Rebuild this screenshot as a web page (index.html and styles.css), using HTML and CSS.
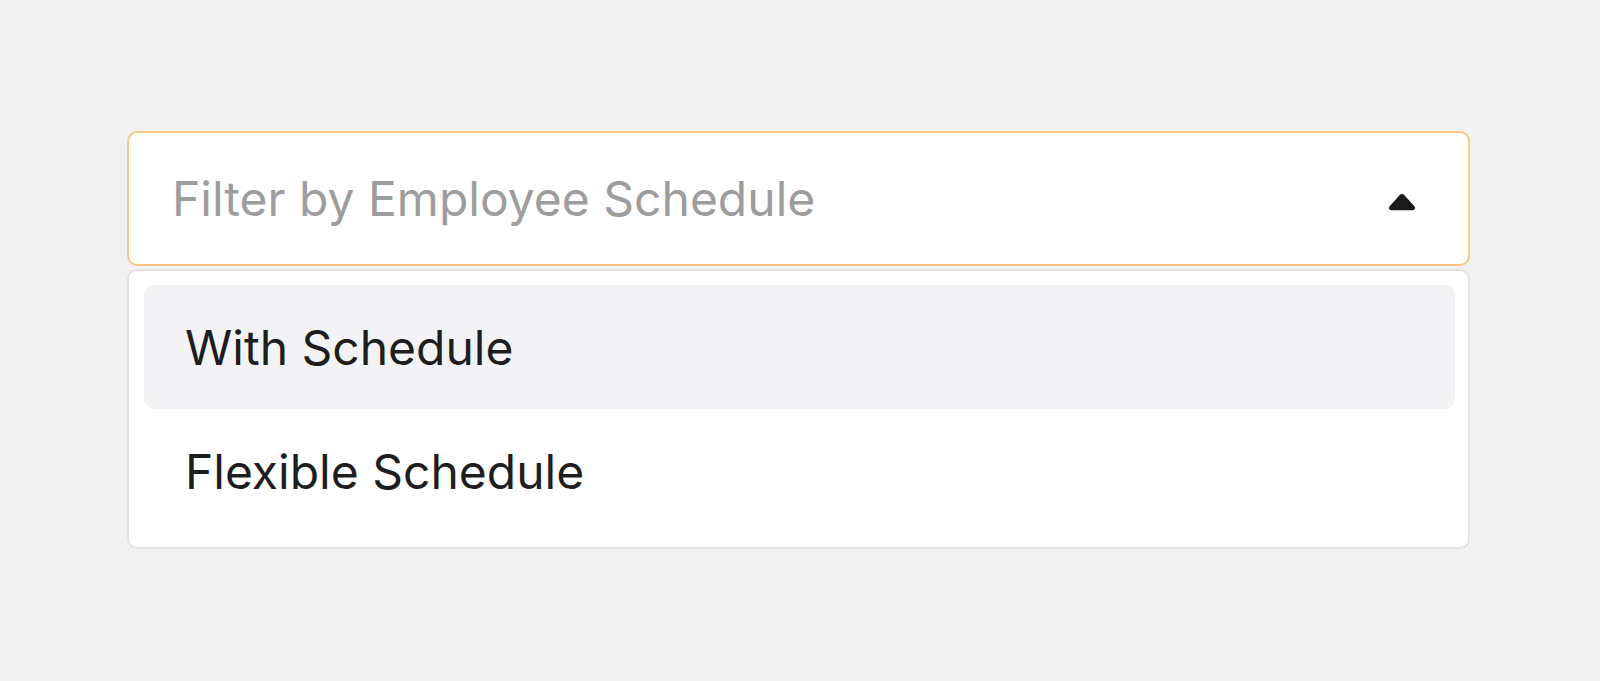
FILE: index.html
```html
<!DOCTYPE html>
<html lang="en">
<head>
<meta charset="utf-8">
<title>Filter by Employee Schedule</title>
<link rel="stylesheet" href="styles.css">
</head>
<body>
<div class="filter">
  <div class="select">
    <span class="placeholder">Filter by Employee Schedule</span>
    <svg class="caret" width="28" height="18" viewBox="0 0 28 18" aria-hidden="true">
      <path d="M11.6 2.2 Q14 -0.4 16.4 2.2 L26.2 13 Q28.6 16 25 17.2 L3 17.2 Q-0.6 16 1.8 13 Z" fill="#1a1a1a"/>
    </svg>
  </div>
  <ul class="menu">
    <li class="option active">With Schedule</li>
    <li class="option">Flexible Schedule</li>
  </ul>
</div>
</body>
</html>
```
FILE: styles.css
```css
html, body {
  margin: 0;
  padding: 0;
  background: #f2f2f2;
  font-family: "Inter", "Noto Sans", sans-serif;
}

.filter {
  width: 1343px;
  margin: 131px 0 0 127px;
  display: flex;
  flex-direction: column;
  gap: 3px;
}

.select {
  box-sizing: border-box;
  height: 135px;
  background: #fff;
  border: 2.5px solid #fbc688;
  border-radius: 10px;
  padding: 0 52px 0 43px;
  display: flex;
  align-items: center;
  justify-content: space-between;
}

.placeholder {
  font-size: 48px;
  color: #9d9d9d;
  line-height: 1;
}

.caret {
  display: block;
  margin-top: 6px;
}

.menu {
  box-sizing: border-box;
  list-style: none;
  margin: 0;
  background: #fff;
  border: 2.5px solid #e3e3e6;
  border-radius: 10px;
  padding: 14px 13px 14px 15px;
  display: flex;
  flex-direction: column;
}

.option {
  height: 124px;
  box-sizing: border-box;
  padding-left: 41px;
  display: flex;
  align-items: center;
  font-size: 48px;
  color: #1e1e1e;
  border-radius: 10px;
}

.option.active {
  background: #f3f3f5;
}
```
